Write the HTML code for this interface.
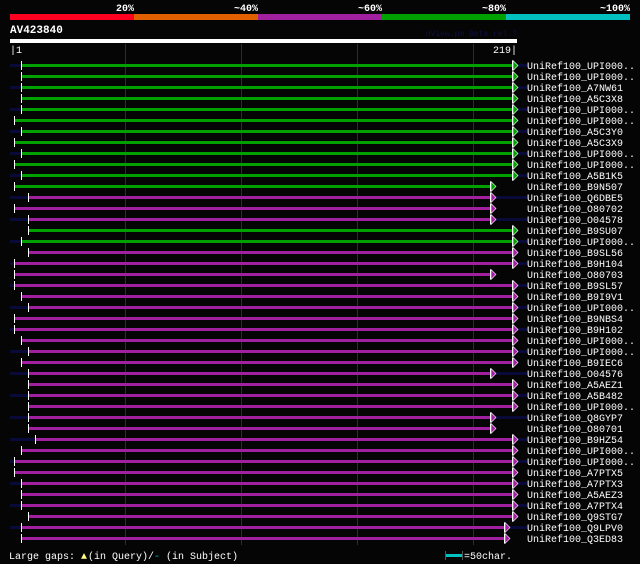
<!DOCTYPE html><html><head><style>
body{margin:0;background:#000;width:640px;height:564px;overflow:hidden}
svg{display:block}
text{font-family:"Liberation Mono","DejaVu Sans Mono",monospace;font-size:10px;fill:#fff}
</style></head><body>
<svg width="640" height="564" xmlns="http://www.w3.org/2000/svg">
<rect width="640" height="564" fill="#050505"/>
<g font-weight="bold" style="font-size:11px"><text x="134" y="11" text-anchor="end">20%</text><text x="258" y="11" text-anchor="end">~40%</text><text x="382" y="11" text-anchor="end">~60%</text><text x="506" y="11" text-anchor="end">~80%</text><text x="630" y="11" text-anchor="end">~100%</text></g>
<rect x="10" y="14" width="124" height="6" fill="#ff0020"/><rect x="134" y="14" width="124" height="6" fill="#e06000"/><rect x="258" y="14" width="124" height="6" fill="#a020a0"/><rect x="382" y="14" width="124" height="6" fill="#00a000"/><rect x="506" y="14" width="124" height="6" fill="#00c0c0"/>
<text x="10" y="33" font-weight="bold" style="font-size:11px">AV423840</text>
<text x="517" y="36" text-anchor="end" style="font-size:8px;fill:#101040">nView.pm Beta rel.7</text>
<rect x="10" y="39" width="507" height="4" fill="#fff"/>
<text x="10" y="53">|1</text><text x="517" y="53" text-anchor="end">219|</text>
<g fill="#333300"><rect x="125" y="44" width="1" height="501"/><rect x="241" y="44" width="1" height="501"/><rect x="357" y="44" width="1" height="501"/><rect x="473" y="44" width="1" height="501"/></g>
<g fill="#0a0a3a">
<rect x="10" y="64" width="11" height="3"/><rect x="518" y="64" width="10" height="3"/>
<rect x="10" y="86" width="11" height="3"/><rect x="518" y="86" width="10" height="3"/>
<rect x="10" y="108" width="11" height="3"/><rect x="518" y="108" width="10" height="3"/>
<rect x="10" y="130" width="11" height="3"/><rect x="518" y="130" width="10" height="3"/>
<rect x="10" y="152" width="11" height="3"/><rect x="518" y="152" width="10" height="3"/>
<rect x="10" y="174" width="11" height="3"/><rect x="518" y="174" width="10" height="3"/>
<rect x="10" y="196" width="18" height="3"/><rect x="496" y="196" width="32" height="3"/>
<rect x="10" y="218" width="18" height="3"/><rect x="496" y="218" width="32" height="3"/>
<rect x="10" y="240" width="11" height="3"/><rect x="518" y="240" width="10" height="3"/>
<rect x="10" y="262" width="4" height="3"/><rect x="518" y="262" width="10" height="3"/>
<rect x="10" y="284" width="4" height="3"/><rect x="518" y="284" width="10" height="3"/>
<rect x="10" y="306" width="18" height="3"/><rect x="518" y="306" width="10" height="3"/>
<rect x="10" y="328" width="4" height="3"/><rect x="518" y="328" width="10" height="3"/>
<rect x="10" y="350" width="18" height="3"/><rect x="518" y="350" width="10" height="3"/>
<rect x="10" y="372" width="18" height="3"/><rect x="496" y="372" width="32" height="3"/>
<rect x="10" y="394" width="18" height="3"/><rect x="518" y="394" width="10" height="3"/>
<rect x="10" y="416" width="18" height="3"/><rect x="496" y="416" width="32" height="3"/>
<rect x="10" y="438" width="25" height="3"/><rect x="518" y="438" width="10" height="3"/>
<rect x="10" y="460" width="4" height="3"/><rect x="518" y="460" width="10" height="3"/>
<rect x="10" y="482" width="11" height="3"/><rect x="518" y="482" width="10" height="3"/>
<rect x="10" y="504" width="11" height="3"/><rect x="518" y="504" width="10" height="3"/>
<rect x="10" y="526" width="11" height="3"/><rect x="510" y="526" width="18" height="3"/>
</g>
<g>
<rect x="21" y="64" width="491" height="3" fill="#00a000"/>
<rect x="21" y="75" width="491" height="3" fill="#00a000"/>
<rect x="21" y="86" width="491" height="3" fill="#00a000"/>
<rect x="21" y="97" width="491" height="3" fill="#00a000"/>
<rect x="21" y="108" width="491" height="3" fill="#00a000"/>
<rect x="14" y="119" width="498" height="3" fill="#00a000"/>
<rect x="21" y="130" width="491" height="3" fill="#00a000"/>
<rect x="14" y="141" width="498" height="3" fill="#00a000"/>
<rect x="21" y="152" width="491" height="3" fill="#00a000"/>
<rect x="14" y="163" width="498" height="3" fill="#00a000"/>
<rect x="21" y="174" width="491" height="3" fill="#00a000"/>
<rect x="14" y="185" width="476" height="3" fill="#00a000"/>
<rect x="28" y="196" width="462" height="3" fill="#a020a0"/>
<rect x="14" y="207" width="476" height="3" fill="#a020a0"/>
<rect x="28" y="218" width="462" height="3" fill="#a020a0"/>
<rect x="28" y="229" width="484" height="3" fill="#00a000"/>
<rect x="21" y="240" width="491" height="3" fill="#00a000"/>
<rect x="28" y="251" width="484" height="3" fill="#a020a0"/>
<rect x="14" y="262" width="498" height="3" fill="#a020a0"/>
<rect x="14" y="273" width="476" height="3" fill="#a020a0"/>
<rect x="14" y="284" width="498" height="3" fill="#a020a0"/>
<rect x="21" y="295" width="491" height="3" fill="#a020a0"/>
<rect x="28" y="306" width="484" height="3" fill="#a020a0"/>
<rect x="14" y="317" width="498" height="3" fill="#a020a0"/>
<rect x="14" y="328" width="498" height="3" fill="#a020a0"/>
<rect x="21" y="339" width="491" height="3" fill="#a020a0"/>
<rect x="28" y="350" width="484" height="3" fill="#a020a0"/>
<rect x="21" y="361" width="491" height="3" fill="#a020a0"/>
<rect x="28" y="372" width="462" height="3" fill="#a020a0"/>
<rect x="28" y="383" width="484" height="3" fill="#a020a0"/>
<rect x="28" y="394" width="484" height="3" fill="#a020a0"/>
<rect x="28" y="405" width="484" height="3" fill="#a020a0"/>
<rect x="28" y="416" width="462" height="3" fill="#a020a0"/>
<rect x="28" y="427" width="462" height="3" fill="#a020a0"/>
<rect x="35" y="438" width="477" height="3" fill="#a020a0"/>
<rect x="21" y="449" width="491" height="3" fill="#a020a0"/>
<rect x="14" y="460" width="498" height="3" fill="#a020a0"/>
<rect x="14" y="471" width="498" height="3" fill="#a020a0"/>
<rect x="21" y="482" width="491" height="3" fill="#a020a0"/>
<rect x="21" y="493" width="491" height="3" fill="#a020a0"/>
<rect x="21" y="504" width="491" height="3" fill="#a020a0"/>
<rect x="28" y="515" width="484" height="3" fill="#a020a0"/>
<rect x="21" y="526" width="483" height="3" fill="#a020a0"/>
<rect x="21" y="537" width="483" height="3" fill="#a020a0"/>
</g>
<g fill="#fff">
<rect x="21" y="61" width="1" height="9"/><rect x="21" y="72" width="1" height="9"/><rect x="21" y="83" width="1" height="9"/><rect x="21" y="94" width="1" height="9"/><rect x="21" y="105" width="1" height="9"/><rect x="14" y="116" width="1" height="9"/><rect x="21" y="127" width="1" height="9"/><rect x="14" y="138" width="1" height="9"/><rect x="21" y="149" width="1" height="9"/><rect x="14" y="160" width="1" height="9"/><rect x="21" y="171" width="1" height="9"/><rect x="14" y="182" width="1" height="9"/><rect x="28" y="193" width="1" height="9"/><rect x="14" y="204" width="1" height="9"/><rect x="28" y="215" width="1" height="9"/><rect x="28" y="226" width="1" height="9"/><rect x="21" y="237" width="1" height="9"/><rect x="28" y="248" width="1" height="9"/><rect x="14" y="259" width="1" height="9"/><rect x="14" y="270" width="1" height="9"/><rect x="14" y="281" width="1" height="9"/><rect x="21" y="292" width="1" height="9"/><rect x="28" y="303" width="1" height="9"/><rect x="14" y="314" width="1" height="9"/><rect x="14" y="325" width="1" height="9"/><rect x="21" y="336" width="1" height="9"/><rect x="28" y="347" width="1" height="9"/><rect x="21" y="358" width="1" height="9"/><rect x="28" y="369" width="1" height="9"/><rect x="28" y="380" width="1" height="9"/><rect x="28" y="391" width="1" height="9"/><rect x="28" y="402" width="1" height="9"/><rect x="28" y="413" width="1" height="9"/><rect x="28" y="424" width="1" height="9"/><rect x="35" y="435" width="1" height="9"/><rect x="21" y="446" width="1" height="9"/><rect x="14" y="457" width="1" height="9"/><rect x="14" y="468" width="1" height="9"/><rect x="21" y="479" width="1" height="9"/><rect x="21" y="490" width="1" height="9"/><rect x="21" y="501" width="1" height="9"/><rect x="28" y="512" width="1" height="9"/><rect x="21" y="523" width="1" height="9"/><rect x="21" y="534" width="1" height="9"/>
</g>
<defs>
<g id="ag"><rect x="0" y="-5" width="1" height="10" fill="#fff"/><polygon points="1,-5 6,0 1,5" fill="#00a000" stroke="#fff" stroke-width="0.6"/></g>
<g id="ap"><rect x="0" y="-5" width="1" height="10" fill="#fff"/><polygon points="1,-5 6,0 1,5" fill="#a020a0" stroke="#fff" stroke-width="0.6"/></g>
</defs>
<use href="#ag" x="512" y="65.5"/><use href="#ag" x="512" y="76.5"/><use href="#ag" x="512" y="87.5"/><use href="#ag" x="512" y="98.5"/><use href="#ag" x="512" y="109.5"/><use href="#ag" x="512" y="120.5"/><use href="#ag" x="512" y="131.5"/><use href="#ag" x="512" y="142.5"/><use href="#ag" x="512" y="153.5"/><use href="#ag" x="512" y="164.5"/><use href="#ag" x="512" y="175.5"/><use href="#ag" x="490" y="186.5"/>
<use href="#ap" x="490" y="197.5"/><use href="#ap" x="490" y="208.5"/><use href="#ap" x="490" y="219.5"/>
<use href="#ag" x="512" y="230.5"/><use href="#ag" x="512" y="241.5"/>
<use href="#ap" x="512" y="252.5"/><use href="#ap" x="512" y="263.5"/><use href="#ap" x="490" y="274.5"/><use href="#ap" x="512" y="285.5"/><use href="#ap" x="512" y="296.5"/><use href="#ap" x="512" y="307.5"/><use href="#ap" x="512" y="318.5"/><use href="#ap" x="512" y="329.5"/><use href="#ap" x="512" y="340.5"/><use href="#ap" x="512" y="351.5"/><use href="#ap" x="512" y="362.5"/><use href="#ap" x="490" y="373.5"/><use href="#ap" x="512" y="384.5"/><use href="#ap" x="512" y="395.5"/><use href="#ap" x="512" y="406.5"/><use href="#ap" x="490" y="417.5"/><use href="#ap" x="490" y="428.5"/><use href="#ap" x="512" y="439.5"/><use href="#ap" x="512" y="450.5"/><use href="#ap" x="512" y="461.5"/><use href="#ap" x="512" y="472.5"/><use href="#ap" x="512" y="483.5"/><use href="#ap" x="512" y="494.5"/><use href="#ap" x="512" y="505.5"/><use href="#ap" x="512" y="516.5"/><use href="#ap" x="504" y="527.5"/><use href="#ap" x="504" y="538.5"/>
<g>
<text x="527" y="69">UniRef100_UPI000..</text><text x="527" y="80">UniRef100_UPI000..</text><text x="527" y="91">UniRef100_A7NW61</text><text x="527" y="102">UniRef100_A5C3X8</text><text x="527" y="113">UniRef100_UPI000..</text><text x="527" y="124">UniRef100_UPI000..</text><text x="527" y="135">UniRef100_A5C3Y0</text><text x="527" y="146">UniRef100_A5C3X9</text><text x="527" y="157">UniRef100_UPI000..</text><text x="527" y="168">UniRef100_UPI000..</text><text x="527" y="179">UniRef100_A5B1K5</text><text x="527" y="190">UniRef100_B9N507</text><text x="527" y="201">UniRef100_Q6DBE5</text><text x="527" y="212">UniRef100_O80702</text><text x="527" y="223">UniRef100_O04578</text><text x="527" y="234">UniRef100_B9SU07</text><text x="527" y="245">UniRef100_UPI000..</text><text x="527" y="256">UniRef100_B9SL56</text><text x="527" y="267">UniRef100_B9H104</text><text x="527" y="278">UniRef100_O80703</text><text x="527" y="289">UniRef100_B9SL57</text><text x="527" y="300">UniRef100_B9I9V1</text><text x="527" y="311">UniRef100_UPI000..</text><text x="527" y="322">UniRef100_B9NBS4</text><text x="527" y="333">UniRef100_B9H102</text><text x="527" y="344">UniRef100_UPI000..</text><text x="527" y="355">UniRef100_UPI000..</text><text x="527" y="366">UniRef100_B9IEC6</text><text x="527" y="377">UniRef100_O04576</text><text x="527" y="388">UniRef100_A5AEZ1</text><text x="527" y="399">UniRef100_A5B482</text><text x="527" y="410">UniRef100_UPI000..</text><text x="527" y="421">UniRef100_Q8GYP7</text><text x="527" y="432">UniRef100_O80701</text><text x="527" y="443">UniRef100_B9HZ54</text><text x="527" y="454">UniRef100_UPI000..</text><text x="527" y="465">UniRef100_UPI000..</text><text x="527" y="476">UniRef100_A7PTX5</text><text x="527" y="487">UniRef100_A7PTX3</text><text x="527" y="498">UniRef100_A5AEZ3</text><text x="527" y="509">UniRef100_A7PTX4</text><text x="527" y="520">UniRef100_Q9STG7</text><text x="527" y="531">UniRef100_Q9LPV0</text><text x="527" y="542">UniRef100_Q3ED83</text>
</g>
<text x="9" y="559">Large gaps:</text><text x="81" y="559" style="fill:#ffff80">▲</text><text x="88" y="559">(in Query)/</text><text x="154" y="559" style="fill:#00c0c0">-</text><text x="166" y="559">(in Subject)</text>
<rect x="446" y="554" width="16" height="3" fill="#00c0c0"/><rect x="445" y="551" width="1" height="9" fill="#555"/><rect x="462" y="551" width="1" height="9" fill="#555"/>
<text x="464" y="559">=50char.</text>
</svg>
</body></html>
